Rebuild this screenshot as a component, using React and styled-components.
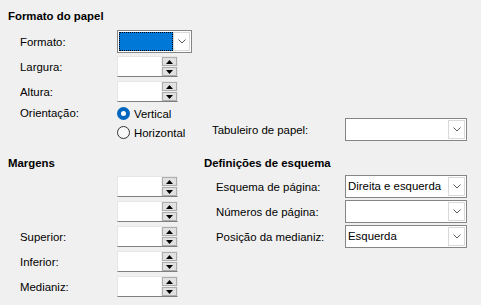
import React from 'react';
import styled, { createGlobalStyle } from 'styled-components';

const GlobalStyle = createGlobalStyle`
  html, body {
    margin: 0;
    padding: 0;
    background: #f0f0f0;
  }
  body {
    font-family: "Liberation Sans", Arial, sans-serif;
    font-size: 11.4px;
    color: #000;
  }
`;

const Dialog = styled.div`
  width: 481px;
  height: 305px;
  box-sizing: border-box;
  padding: 8px 0 0 8px;
  overflow: hidden;
`;

const Heading = styled.div`
  font-weight: bold;
  height: 16px;
  line-height: 16px;
`;

const Fields = styled.div`
  display: flex;
  flex-direction: column;
  padding-left: 12px;
  margin-top: ${(p) => p.$top || 0}px;
`;

const Row = styled.div`
  display: flex;
  align-items: center;
  height: 25px;
`;

const Label = styled.div`
  width: ${(p) => p.$width}px;
  flex-shrink: 0;
  padding-top: 1px;
`;

/* combo box */
const ComboBox = styled.div`
  box-sizing: border-box;
  width: ${(p) => p.$width}px;
  height: 23px;
  border: 1px solid #858585;
  background: #fff;
  display: flex;
  padding: 1px;
`;

const ComboText = styled.div`
  flex: 1;
  padding-left: 1px;
  line-height: 19px;
  white-space: nowrap;
  overflow: hidden;
`;

const FocusedValue = styled.div`
  flex: 1;
  background: #0078d7;
  outline: 1px dotted #000;
  outline-offset: -1px;
`;

const DropButton = styled.div`
  width: 17px;
  box-sizing: border-box;
  border: 1px solid #d9d9d9;
  background: #fff;
  display: flex;
  align-items: center;
  justify-content: center;
`;

const Chevron = () => (
  <svg width="8" height="5" viewBox="0 0 8 5">
    <path d="M0.5 0.5 L4 4 L7.5 0.5" fill="none" stroke="#5a5a5a" strokeWidth="1" />
  </svg>
);

const Combo = ({ width, value, focused }) => (
  <ComboBox $width={width}>
    {focused ? <FocusedValue /> : <ComboText>{value}</ComboText>}
    <DropButton>
      <Chevron />
    </DropButton>
  </ComboBox>
);

/* spin field */
const SpinBox = styled.div`
  box-sizing: border-box;
  width: 61px;
  height: 21px;
  display: flex;
  background: #fff;
  border: 1px solid #e6e6e6;
  border-bottom: 1px solid #7f7f7f;
`;

const SpinInput = styled.div`
  flex: 1;
`;

const SpinButtons = styled.div`
  width: 15px;
  display: flex;
  flex-direction: column;
  gap: 1px;
  background: #f0f0f0;
  padding: 0 0 0 1px;
`;

const SpinButton = styled.div`
  flex: 1;
  box-sizing: border-box;
  border: 1px solid #adadad;
  background: #e1e1e1;
  display: flex;
  align-items: center;
  justify-content: center;
`;

const Arrow = ({ down }) => (
  <svg width="7" height="4" viewBox="0 0 7 4">
    <path d={down ? 'M0 0 H7 L3.5 4 Z' : 'M0 4 H7 L3.5 0 Z'} fill="#000" />
  </svg>
);

const Spin = () => (
  <SpinBox>
    <SpinInput />
    <SpinButtons>
      <SpinButton>
        <Arrow />
      </SpinButton>
      <SpinButton>
        <Arrow down />
      </SpinButton>
    </SpinButtons>
  </SpinBox>
);

/* radios */
const OrientationRow = styled.div`
  display: flex;
  align-items: flex-start;
`;

const RadioGroup = styled.div`
  width: 95px;
  display: flex;
  flex-direction: column;
`;

const RadioLine = styled.div`
  height: 19px;
  display: flex;
  align-items: center;
  gap: 4px;
`;

const RadioDot = styled.span`
  box-sizing: border-box;
  width: 13px;
  height: 13px;
  border-radius: 50%;
  border: ${(p) => (p.$checked ? 'none' : '1px solid #333')};
  background: ${(p) => (p.$checked ? '#0067c0' : '#f8f8f8')};
  display: flex;
  align-items: center;
  justify-content: center;
  &::after {
    content: '';
    display: ${(p) => (p.$checked ? 'block' : 'none')};
    width: 5px;
    height: 5px;
    border-radius: 50%;
    background: #fff;
  }
`;

const OrientLabel = styled(Label)`
  height: 19px;
  line-height: 19px;
  padding-top: 0;
`;

const TrayGroup = styled.div`
  align-self: flex-end;
  display: flex;
  align-items: center;
  margin-bottom: 1px;
`;

/* lower part */
const Columns = styled.div`
  display: flex;
  margin-top: 13px;
`;

const LeftColumn = styled.div`
  width: 196px;
`;

const RightColumn = styled.div`
  flex: 1;
`;

export default function App() {
  return (
    <>
      <GlobalStyle />
      <Dialog>
        <Heading>Formato do papel</Heading>
        <Fields $top={5}>
          <Row>
            <Label $width={97}>Formato:</Label>
            <Combo width={75} focused />
          </Row>
          <Row>
            <Label $width={97}>Largura:</Label>
            <Spin />
          </Row>
          <Row>
            <Label $width={97}>Altura:</Label>
            <Spin />
          </Row>
          <OrientationRow>
            <OrientLabel $width={97}>Orientação:</OrientLabel>
            <RadioGroup>
              <RadioLine>
                <RadioDot $checked />
                Vertical
              </RadioLine>
              <RadioLine>
                <RadioDot />
                Horizontal
              </RadioLine>
            </RadioGroup>
            <TrayGroup>
              <Label $width={133}>Tabuleiro de papel:</Label>
              <Combo width={122} />
            </TrayGroup>
          </OrientationRow>
        </Fields>

        <Columns>
          <LeftColumn>
            <Heading>Margens</Heading>
            <Fields $top={3}>
              <Row>
                <Label $width={97} />
                <Spin />
              </Row>
              <Row>
                <Label $width={97} />
                <Spin />
              </Row>
              <Row>
                <Label $width={97}>Superior:</Label>
                <Spin />
              </Row>
              <Row>
                <Label $width={97}>Inferior:</Label>
                <Spin />
              </Row>
              <Row>
                <Label $width={97}>Medianiz:</Label>
                <Spin />
              </Row>
            </Fields>
          </LeftColumn>
          <RightColumn>
            <Heading>Definições de esquema</Heading>
            <Fields $top={3}>
              <Row>
                <Label $width={129}>Esquema de página:</Label>
                <Combo width={122} value="Direita e esquerda" />
              </Row>
              <Row>
                <Label $width={129}>Números de página:</Label>
                <Combo width={122} />
              </Row>
              <Row>
                <Label $width={129}>Posição da medianiz:</Label>
                <Combo width={122} value="Esquerda" />
              </Row>
            </Fields>
          </RightColumn>
        </Columns>
      </Dialog>
    </>
  );
}
